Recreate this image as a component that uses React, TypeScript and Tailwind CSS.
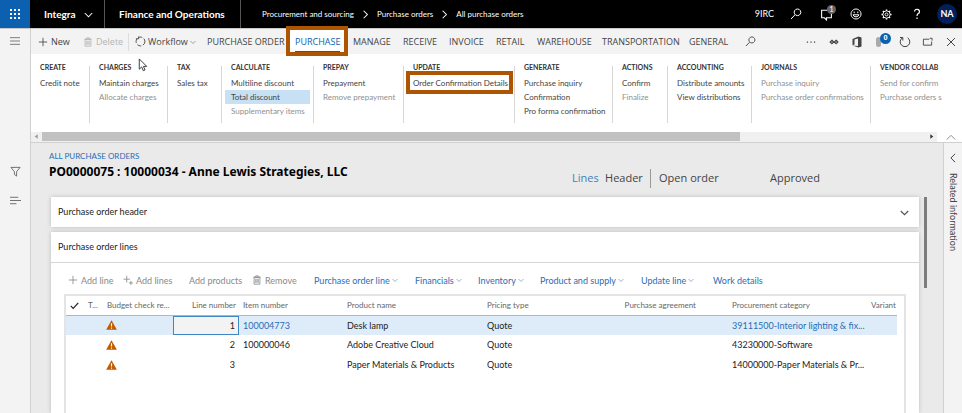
import { useState } from "react";
import type { ReactNode } from "react";

type IconProps = { d: string; className?: string; fill?: boolean; sw?: number };

/* Line icon on a 12-unit grid. */
function Icon({ d, className = "size-[12px]", fill = false, sw = 1 }: IconProps) {
  return (
    <svg
      viewBox="0 0 12 12"
      aria-hidden="true"
      className={`shrink-0 ${className}`}
      fill={fill ? "currentColor" : "none"}
      stroke={fill ? "none" : "currentColor"}
      strokeWidth={sw}
    >
      <path d={d} />
    </svg>
  );
}

const paths = {
  down: "M1 4 L6 9 L11 4",
  up: "M1 9 L6 4 L11 9",
  left: "M8.5 1 L3.5 6 L8.5 11",
  right: "M3.5 1 L8.5 6 L3.5 11",
  plus: "M6 1 V11 M1 6 H11",
  plusSmall: "M4.5 1 V9 M0.5 5 H8.5 M9.5 7 V12 M7 9.5 H12",
  trash: "M2.5 3 H9.5 V11 H2.5 Z M1.5 2.5 H10.5 M4.5 2.5 V1 H7.5 V2.5 M4.5 4.5 V9.5 M6 4.5 V9.5 M7.5 4.5 V9.5",
  search: "M7.5 1 A3.3 3.3 0 1 1 7.49 1 Z M5 6.8 L1 11",
  close: "M2 2 L10 10 M10 2 L2 10",
  popout: "M8 3.5 H1.5 V10 H10.5 V6 M8.5 2.5 H11 V5",
  refresh: "M8.6 1.8 A4.8 4.8 0 1 1 3.4 1.8 M3.8 4.5 V1.5 H1",
  check: "M1 6.5 L4.3 9.8 L11 2.5",
  funnel: "M1 1.5 H11 L7.2 6.2 V11 L4.8 9.2 V6.2 Z",
  menu: "M0 2 H12 M0 6 H12 M0 10 H12",
  list: "M0 2.5 H9 M0 6 H12 M0 9.5 H7",
  smile: "M6 1 A5 5 0 1 0 6.01 1 Z M3 6.8 A3.2 3.2 0 0 0 9 6.8 Z M4.2 3.6 V5.2 M7.8 3.6 V5.2",
  help: "M3.5 3.5 A2.5 2.3 0 1 1 7.2 5.6 Q6 6.3 6 8 M6 9.6 V11",
};

function Gear() {
  const teeth = [0, 45, 90, 135, 180, 225, 270, 315];
  return (
    <svg viewBox="0 0 12 12" aria-hidden="true" className="size-[11px]" fill="none" stroke="currentColor">
      <circle cx="6" cy="6" r="4" />
      <circle cx="6" cy="6" r="1.6" />
      {teeth.map((a) => (
        <path key={a} d="M6 2 V0.5" strokeWidth="1.6" transform={`rotate(${a} 6 6)`} />
      ))}
    </svg>
  );
}

function Waffle() {
  return (
    <svg viewBox="0 0 10 10" aria-hidden="true" className="size-[10px]" fill="white">
      {[0, 4, 8].map((y) => [0, 4, 8].map((x) => <rect key={`${x}${y}`} x={x} y={y} width="2" height="2" />))}
    </svg>
  );
}

function Warning() {
  return (
    <svg viewBox="0 0 12 11" role="img" aria-label="Warning" className="h-[10px] w-[11px]">
      <path d="M6 0.3 L11.9 10.7 H0.1 Z" fill="#c25b00" />
      <path d="M6 3.5 V7.2 M6 8.2 V9.6" stroke="white" strokeWidth="1.3" />
    </svg>
  );
}

function IconButton({ label, children, className = "w-[23px]" }: { label: string; children: ReactNode; className?: string }) {
  return (
    <button type="button" aria-label={label} className={`relative flex h-full shrink-0 items-center justify-center ${className}`}>
      {children}
    </button>
  );
}

const tabs = [
  { name: "PURCHASE ORDER", w: "w-[88px]" },
  { name: "PURCHASE", w: "w-[58px]" },
  { name: "MANAGE", w: "w-[50px]" },
  { name: "RECEIVE", w: "w-[46px]" },
  { name: "INVOICE", w: "w-[47px]" },
  { name: "RETAIL", w: "w-[41px]" },
  { name: "WAREHOUSE", w: "w-[65px]" },
  { name: "TRANSPORTATION", w: "w-[87px]" },
  { name: "GENERAL", w: "w-[52px]" },
];

type Item = { text: string; off?: boolean; selected?: boolean; framed?: boolean };

const groups: { title: string; w: string; items: Item[] }[] = [
  { title: "CREATE", w: "w-[59px]", items: [{ text: "Credit note" }] },
  { title: "CHARGES", w: "w-[78px]", items: [{ text: "Maintain charges" }, { text: "Allocate charges", off: true }] },
  { title: "TAX", w: "w-[54px]", items: [{ text: "Sales tax" }] },
  {
    title: "CALCULATE",
    w: "w-[92px]",
    items: [{ text: "Multiline discount" }, { text: "Total discount", selected: true }, { text: "Supplementary items", off: true }],
  },
  { title: "PREPAY", w: "w-[90px]", items: [{ text: "Prepayment" }, { text: "Remove prepayment", off: true }] },
  { title: "UPDATE", w: "w-[111px]", items: [{ text: "Order Confirmation Details", framed: true }] },
  { title: "GENERATE", w: "w-[98px]", items: [{ text: "Purchase inquiry" }, { text: "Confirmation" }, { text: "Pro forma confirmation" }] },
  { title: "ACTIONS", w: "w-[55px]", items: [{ text: "Confirm" }, { text: "Finalize", off: true }] },
  { title: "ACCOUNTING", w: "w-[84px]", items: [{ text: "Distribute amounts" }, { text: "View distributions" }] },
  { title: "JOURNALS", w: "w-[119px]", items: [{ text: "Purchase inquiry", off: true }, { text: "Purchase order confirmations", off: true }] },
  { title: "VENDOR COLLAB", w: "w-[74px]", items: [{ text: "Send for confirm", off: true }, { text: "Purchase orders s", off: true }] },
];

const lines = [
  { n: 1, item: "100004773", product: "Desk lamp", category: "39111500-Interior lighting & fix..." },
  { n: 2, item: "100000046", product: "Adobe Creative Cloud", category: "43230000-Software" },
  { n: 3, item: "", product: "Paper Materials & Products", category: "14000000-Paper Materials & Pr..." },
];

function TopBar() {
  return (
    <header className="flex h-[28px] shrink-0 items-center bg-black text-white">
      <button type="button" aria-label="App launcher" className="flex h-full w-[30px] shrink-0 items-center justify-center bg-[#0b61b0]">
        <Waffle />
      </button>
      <button type="button" className="flex h-full w-[75px] shrink-0 items-center gap-[8px] border-r border-[#555] pl-[14px] text-[10px] font-bold">
        Integra
        <Icon d={paths.down} className="size-[9px]" sw={1.4} />
      </button>
      <span className="flex h-full w-[136px] shrink-0 items-center border-r border-[#555] pl-[14px] text-[10px] font-bold whitespace-nowrap">
        Finance and Operations
      </span>
      <nav aria-label="Breadcrumb" className="flex items-center gap-[7px] pl-[21px] text-[8px] whitespace-nowrap">
        <a href="#sourcing">Procurement and sourcing</a>
        <Icon d={paths.right} className="size-[9px]" sw={1.4} />
        <a href="#orders">Purchase orders</a>
        <Icon d={paths.right} className="size-[9px]" sw={1.4} />
        <a href="#all">All purchase orders</a>
      </nav>
      <div className="ml-auto flex h-full items-center">
        <span className="pr-[6px] text-[9px]">9IRC</span>
        <IconButton label="Search" className="w-[31px]"><Icon d={paths.search} /></IconButton>
        <IconButton label="Messages" className="w-[30px]">
          <Icon d="M7 2 H1.5 V9 H4 L6 11 V9 H10.5 V5" className="size-[13px]" />
          <span className="absolute top-[5px] right-[5px] flex size-[9px] items-center justify-center rounded-full bg-[#666] text-[7px]">1</span>
        </IconButton>
        <IconButton label="Feedback" className="w-[30px]"><Icon d={paths.smile} /></IconButton>
        <IconButton label="Settings" className="w-[31px]"><Gear /></IconButton>
        <IconButton label="Help" className="w-[30px]"><Icon d={paths.help} sw={1.2} /></IconButton>
        <button type="button" className="mr-[5px] ml-[5px] flex size-[20px] items-center justify-center rounded-full bg-[#00205b] text-[9px] font-bold">
          NA
        </button>
      </div>
    </header>
  );
}

function Toolbar({ active, onSelect }: { active: string; onSelect: (name: string) => void }) {
  return (
    <div className="flex h-[25px] shrink-0 items-center bg-[#f3f3f3] font-['Open_Sans','Noto_Sans',sans-serif] text-[9px] text-[#444]">
      <button type="button" className="ml-[7px] flex w-[45px] shrink-0 items-center gap-[3px]">
        <Icon d={paths.plus} className="size-[10px]" />
        New
      </button>
      <button type="button" disabled className="flex w-[45px] shrink-0 items-center gap-[3px] text-[#b3b3b3]">
        <Icon d={paths.trash} className="size-[10px]" />
        Delete
      </button>
      <button type="button" className="mr-[13px] flex h-[18px] w-[66px] shrink-0 items-center gap-[2px] border-l border-[#ddd] pl-[6px]">
        <svg viewBox="0 0 12 12" aria-hidden="true" className="size-[11px] shrink-0" fill="none" stroke="currentColor">
          <circle cx="6" cy="6" r="4.8" strokeDasharray="4.5 2" />
          <path d="M1 3 H4 V0.5" />
        </svg>
        Workflow
        <Icon d={paths.down} className="size-[6px]" />
      </button>
      {tabs.map((tab) => (
        <button
          key={tab.name}
          type="button"
          onClick={() => onSelect(tab.name)}
          className={`relative flex h-full shrink-0 items-center whitespace-nowrap ${tab.w} ${tab.name === active ? "text-[#0b61b0]" : ""}`}
        >
          {tab.name === active ? (
            <>
              <span className="absolute -top-[3px] right-[5px] -left-[9px] z-10 h-[30px] border-4 border-[#ad5500]" />
              <span className="absolute right-[5px] -left-[9px] h-full bg-white" />
              <span className="relative flex h-[23px] items-center border-b-2 border-[#0b61b0] pt-[2px]">{tab.name}</span>
            </>
          ) : (
            tab.name
          )}
        </button>
      ))}
      <IconButton label="Search actions" className="w-[18px]"><Icon d={paths.search} className="size-[11px]" /></IconButton>
      <div className="ml-auto flex h-full items-center">
        <IconButton label="More">
          <Icon d="M1 5.5 H2.5 V7 H1 Z M5.3 5.5 H6.8 V7 H5.3 Z M9.5 5.5 H11 V7 H9.5 Z" className="mr-[4px] size-[10px]" fill />
        </IconButton>
        <IconButton label="Connections"><Icon d="M3.5 4 L5.5 6 L3.5 8 L1.5 6 Z M8.5 4 L10.5 6 L8.5 8 L6.5 6 Z" className="mr-[3px] size-[10px]" sw={1.6} /></IconButton>
        <IconButton label="Open in Office"><Icon d="M1.5 3 L7.5 0.5 L10.5 1.5 V10.5 L7.5 11.5 L1.5 9.5 L7 10 V2.5 L3.5 3.4 V8.5 L1.5 9.3 Z" className="mr-[3px] size-[12px]" fill /></IconButton>
        <IconButton label="Attachments">
          <span className="mr-[7px] h-[10px] w-[5px] rounded-full bg-[#aaa]" />
          <span className="absolute top-[4px] right-[2px] flex size-[11px] items-center justify-center rounded-full bg-[#0b61b0] text-[7px] font-bold text-white">0</span>
        </IconButton>
        <IconButton label="Refresh"><Icon d={paths.refresh} /></IconButton>
        <IconButton label="Open in new window"><Icon d={paths.popout} className="size-[11px]" /></IconButton>
        <IconButton label="Close"><Icon d={paths.close} /></IconButton>
      </div>
    </div>
  );
}

function Ribbon() {
  return (
    <div className="flex shrink-0 flex-col border-b border-[#d0d0d0] bg-white">
      <div className="mr-[17px] flex h-[77px] overflow-hidden text-[8px] leading-[14px] text-[#444]">
        {groups.map((g, i) => (
          <section key={g.title} className={`relative flex shrink-0 flex-col items-start pt-[6px] pl-[9px] whitespace-nowrap ${g.w}`}>
            {i < groups.length - 1 && <span className="absolute top-[12px] right-0 h-[57px] w-px bg-[#d6d6d6]" />}
            <h2 className="mb-[2px] text-[7px] font-bold text-[#333]">{g.title}</h2>
            {g.items.map((it) => (
              <button
                key={it.text}
                type="button"
                disabled={it.off}
                className={`relative h-[14px] text-left ${it.off ? "text-[#8f8f8f]" : ""} ${it.selected ? "-ml-[6px] w-[85px] bg-[#c7e0f4] pl-[6px]" : ""}`}
              >
                {it.text}
                {it.framed && <span className="absolute -top-[5px] -left-[7px] h-[23px] w-[107px] border-4 border-[#ad5500]" />}
              </button>
            ))}
          </section>
        ))}
      </div>
      <div className="flex h-[11px] items-center">
        <div className="flex h-[10px] flex-1 items-center bg-[#f0f0f0]">
          <button type="button" aria-label="Scroll left" className="flex w-[11px] justify-center text-[#999]">
            <Icon d="M8 2 V10 L3 6 Z" className="size-[7px]" fill />
          </button>
          <span className="h-[9px] w-[77%] bg-[#c1c1c1]" />
          <button type="button" aria-label="Scroll right" className="ml-auto flex w-[11px] justify-center text-[#333]">
            <Icon d="M4 2 V10 L9 6 Z" className="size-[7px]" fill />
          </button>
        </div>
        <button type="button" aria-label="Collapse ribbon" className="flex w-[25px] justify-center pl-[3px] text-[#777]">
          <Icon d={paths.up} className="size-[10px]" />
        </button>
      </div>
    </div>
  );
}

function LinesTable() {
  const head = "px-[4px] text-left font-normal whitespace-nowrap";
  return (
    <div className="mx-[13px] mt-[4px] flex-1 border-2 border-b-0 border-[#e4e4e4] pr-[7px]">
      <table className="w-full table-fixed border-collapse text-[9px] text-[#222]">
        <colgroup>
          <col className="w-[18px]" />
          <col className="w-[20px]" />
          <col className="w-[69px]" />
          <col className="w-[66px]" />
          <col className="w-[104px]" />
          <col className="w-[140px]" />
          <col className="w-[120px]" />
          <col className="w-[125px]" />
          <col className="w-[139px]" />
          <col />
        </colgroup>
        <thead>
          <tr className="h-[19px] border-b border-[#b5b5b5] text-[8px] text-[#666]">
            <th className="pl-[4px] text-[#222]"><Icon d={paths.check} className="size-[9px]" sw={1.6} /></th>
            <th className={head}>T...</th>
            <th className="px-[3px] text-left font-normal whitespace-nowrap">Budget check re...</th>
            <th className="px-[3px] text-right font-normal whitespace-nowrap">Line number</th>
            <th className={head}>Item number</th>
            <th className={head}>Product name</th>
            <th className={head}>Pricing type</th>
            <th className="pr-[32px] text-right font-normal whitespace-nowrap">Purchase agreement</th>
            <th className={head}>Procurement category</th>
            <th className="pl-[4px] text-left font-normal whitespace-nowrap">Variant</th>
          </tr>
        </thead>
        <tbody>
          {lines.map((l) => {
            const on = l.n === 1;
            return (
              <tr key={l.n} className={`h-[20px] ${on ? "bg-[#deecf9]" : ""}`}>
                <td />
                <td />
                <td className="pl-[2px]"><Warning /></td>
                <td className="p-0">
                  {on ? (
                    <input aria-label="Line number" defaultValue="1" className="block h-[19px] w-full border border-[#3f86c4] bg-[#f3f3f3] pr-[3px] text-right outline-none" />
                  ) : (
                    <span className="block pr-[4px] text-right">{l.n}</span>
                  )}
                </td>
                <td className="px-[4px]">{on ? <a href="#item" className="text-[#2a6db5]">{l.item}</a> : l.item}</td>
                <td className="px-[4px] whitespace-nowrap">{l.product}</td>
                <td className="px-[4px]">Quote</td>
                <td />
                <td className={`pl-[4px] whitespace-nowrap ${on ? "text-[#2a6db5]" : ""}`}>{l.category}</td>
                <td />
              </tr>
            );
          })}
        </tbody>
      </table>
    </div>
  );
}

const menus = [
  { name: "Purchase order line", w: "w-[101px]", menu: true },
  { name: "Financials", w: "w-[63px]", menu: true },
  { name: "Inventory", w: "w-[62px]", menu: true },
  { name: "Product and supply", w: "w-[101px]", menu: true },
  { name: "Update line", w: "w-[72px]", menu: true },
  { name: "Work details", w: "w-[60px]", menu: false },
];

function Content() {
  return (
    <main className="flex min-w-0 flex-1 flex-col bg-[#eaeaea] pl-[18px]">
      <div className="flex h-[52px] shrink-0">
        <div className="flex flex-col pt-[6px] whitespace-nowrap">
          <a href="#list" className="text-[8px] leading-[14px] text-[#2a6db5]">ALL PURCHASE ORDERS</a>
          <h1 className="font-['Noto_Sans',sans-serif] text-[12px] leading-[18px] font-bold text-black">PO0000075 : 10000034 - Anne Lewis Strategies, LLC</h1>
        </div>
        <div className="mt-[25px] mr-[123px] ml-auto flex h-[20px] items-center font-['Open_Sans','Noto_Sans',sans-serif] text-[11px] text-[#444]">
          <a href="#lines" className="w-[33px] text-[#3f7fc0]">Lines</a>
          <a href="#header" className="w-[45px]">Header</a>
          <span className="flex h-[19px] w-[120px] items-center border-l border-[#999] pl-[8px] whitespace-nowrap">Open order</span>
          <span>Approved</span>
        </div>
      </div>
      <div className="flex min-h-0 flex-1 pt-[2px]">
        <div className="flex min-w-0 flex-1 flex-col gap-[5px] pl-[2px] text-[9px] text-[#222]">
          <button type="button" className="flex h-[30px] shrink-0 items-center justify-between bg-white pr-[10px] pl-[7px] shadow-[0_0_4px_#bbb]">
            Purchase order header
            <Icon d={paths.down} className="size-[9px] text-[#555]" sw={1.6} />
          </button>
          <section className="flex flex-1 flex-col bg-white shadow-[0_0_4px_#bbb]">
            <h2 className="flex h-[31px] shrink-0 items-center border-b border-[#d6d6d6] pl-[7px]">Purchase order lines</h2>
            <div className="flex h-[27px] shrink-0 items-end pb-[3px] pl-[17px] whitespace-nowrap text-[#8a8a8a]">
              <button type="button" className="flex w-[55px] items-center gap-[3px]"><Icon d={paths.plus} className="size-[10px]" />Add line</button>
              <button type="button" className="flex w-[66px] items-center gap-[3px]"><Icon d={paths.plusSmall} className="size-[10px]" />Add lines</button>
              <button type="button" className="w-[63px] text-left">Add products</button>
              <button type="button" className="flex w-[62px] items-center gap-[3px]"><Icon d={paths.trash} className="size-[10px]" />Remove</button>
              {menus.map((m) => (
                <button key={m.name} type="button" className={`flex shrink-0 items-center gap-[2px] text-[#2a6db5] ${m.w}`}>
                  {m.name}
                  {m.menu && <Icon d={paths.down} className="size-[6px]" />}
                </button>
              ))}
            </div>
            <LinesTable />
          </section>
        </div>
        <div className="w-[24px] shrink-0 pl-[5px]">
          <div className="h-[91px] w-[3px] bg-[#7d7d7d]" />
        </div>
      </div>
    </main>
  );
}

export default function App() {
  const [active, setActive] = useState("PURCHASE");
  return (
    <div className="relative flex h-screen flex-col overflow-hidden bg-[#eaeaea] font-['Lato','Open_Sans',sans-serif]">
      <TopBar />
      <div className="flex min-h-0 flex-1 border-t border-[#c8c8c8]">
        <aside className="flex w-[31px] shrink-0 flex-col items-center border-r border-[#d0d0d0] bg-[#f3f3f3] pt-[7px] text-[#666]">
          <button type="button" aria-label="Menu" className="flex h-[12px]"><Icon d={paths.menu} className="size-[10px]" /></button>
          <button type="button" aria-label="Filter" className="mt-[118px] flex"><Icon d={paths.funnel} className="size-[11px]" /></button>
          <button type="button" aria-label="Related links" className="mt-[18px] flex"><Icon d={paths.list} className="size-[11px]" /></button>
        </aside>
        <div className="flex min-w-0 flex-1 flex-col">
          <Toolbar active={active} onSelect={setActive} />
          <Ribbon />
          <div className="flex min-h-0 flex-1">
            <Content />
            <aside className="flex w-[19px] shrink-0 flex-col items-center border-l border-[#d0d0d0] bg-[#f3f3f3] pt-[10px] text-[#444]">
              <button type="button" aria-label="Expand related information"><Icon d={paths.left} className="size-[10px]" sw={1.2} /></button>
              <span className="mt-[10px] text-[9px] leading-[14px] whitespace-nowrap [writing-mode:vertical-rl]">Related information</span>
            </aside>
          </div>
        </div>
      </div>
      {/* Mouse pointer over the ribbon */}
      <svg viewBox="0 0 10 15" aria-hidden="true" className="pointer-events-none absolute top-[58px] left-[138px] h-[14px] w-[10px]">
        <path d="M1 1 V12 L3.6 9.6 L5.3 13.6 L7.2 12.8 L5.5 9 H9 Z" fill="white" stroke="#333" />
      </svg>
    </div>
  );
}
